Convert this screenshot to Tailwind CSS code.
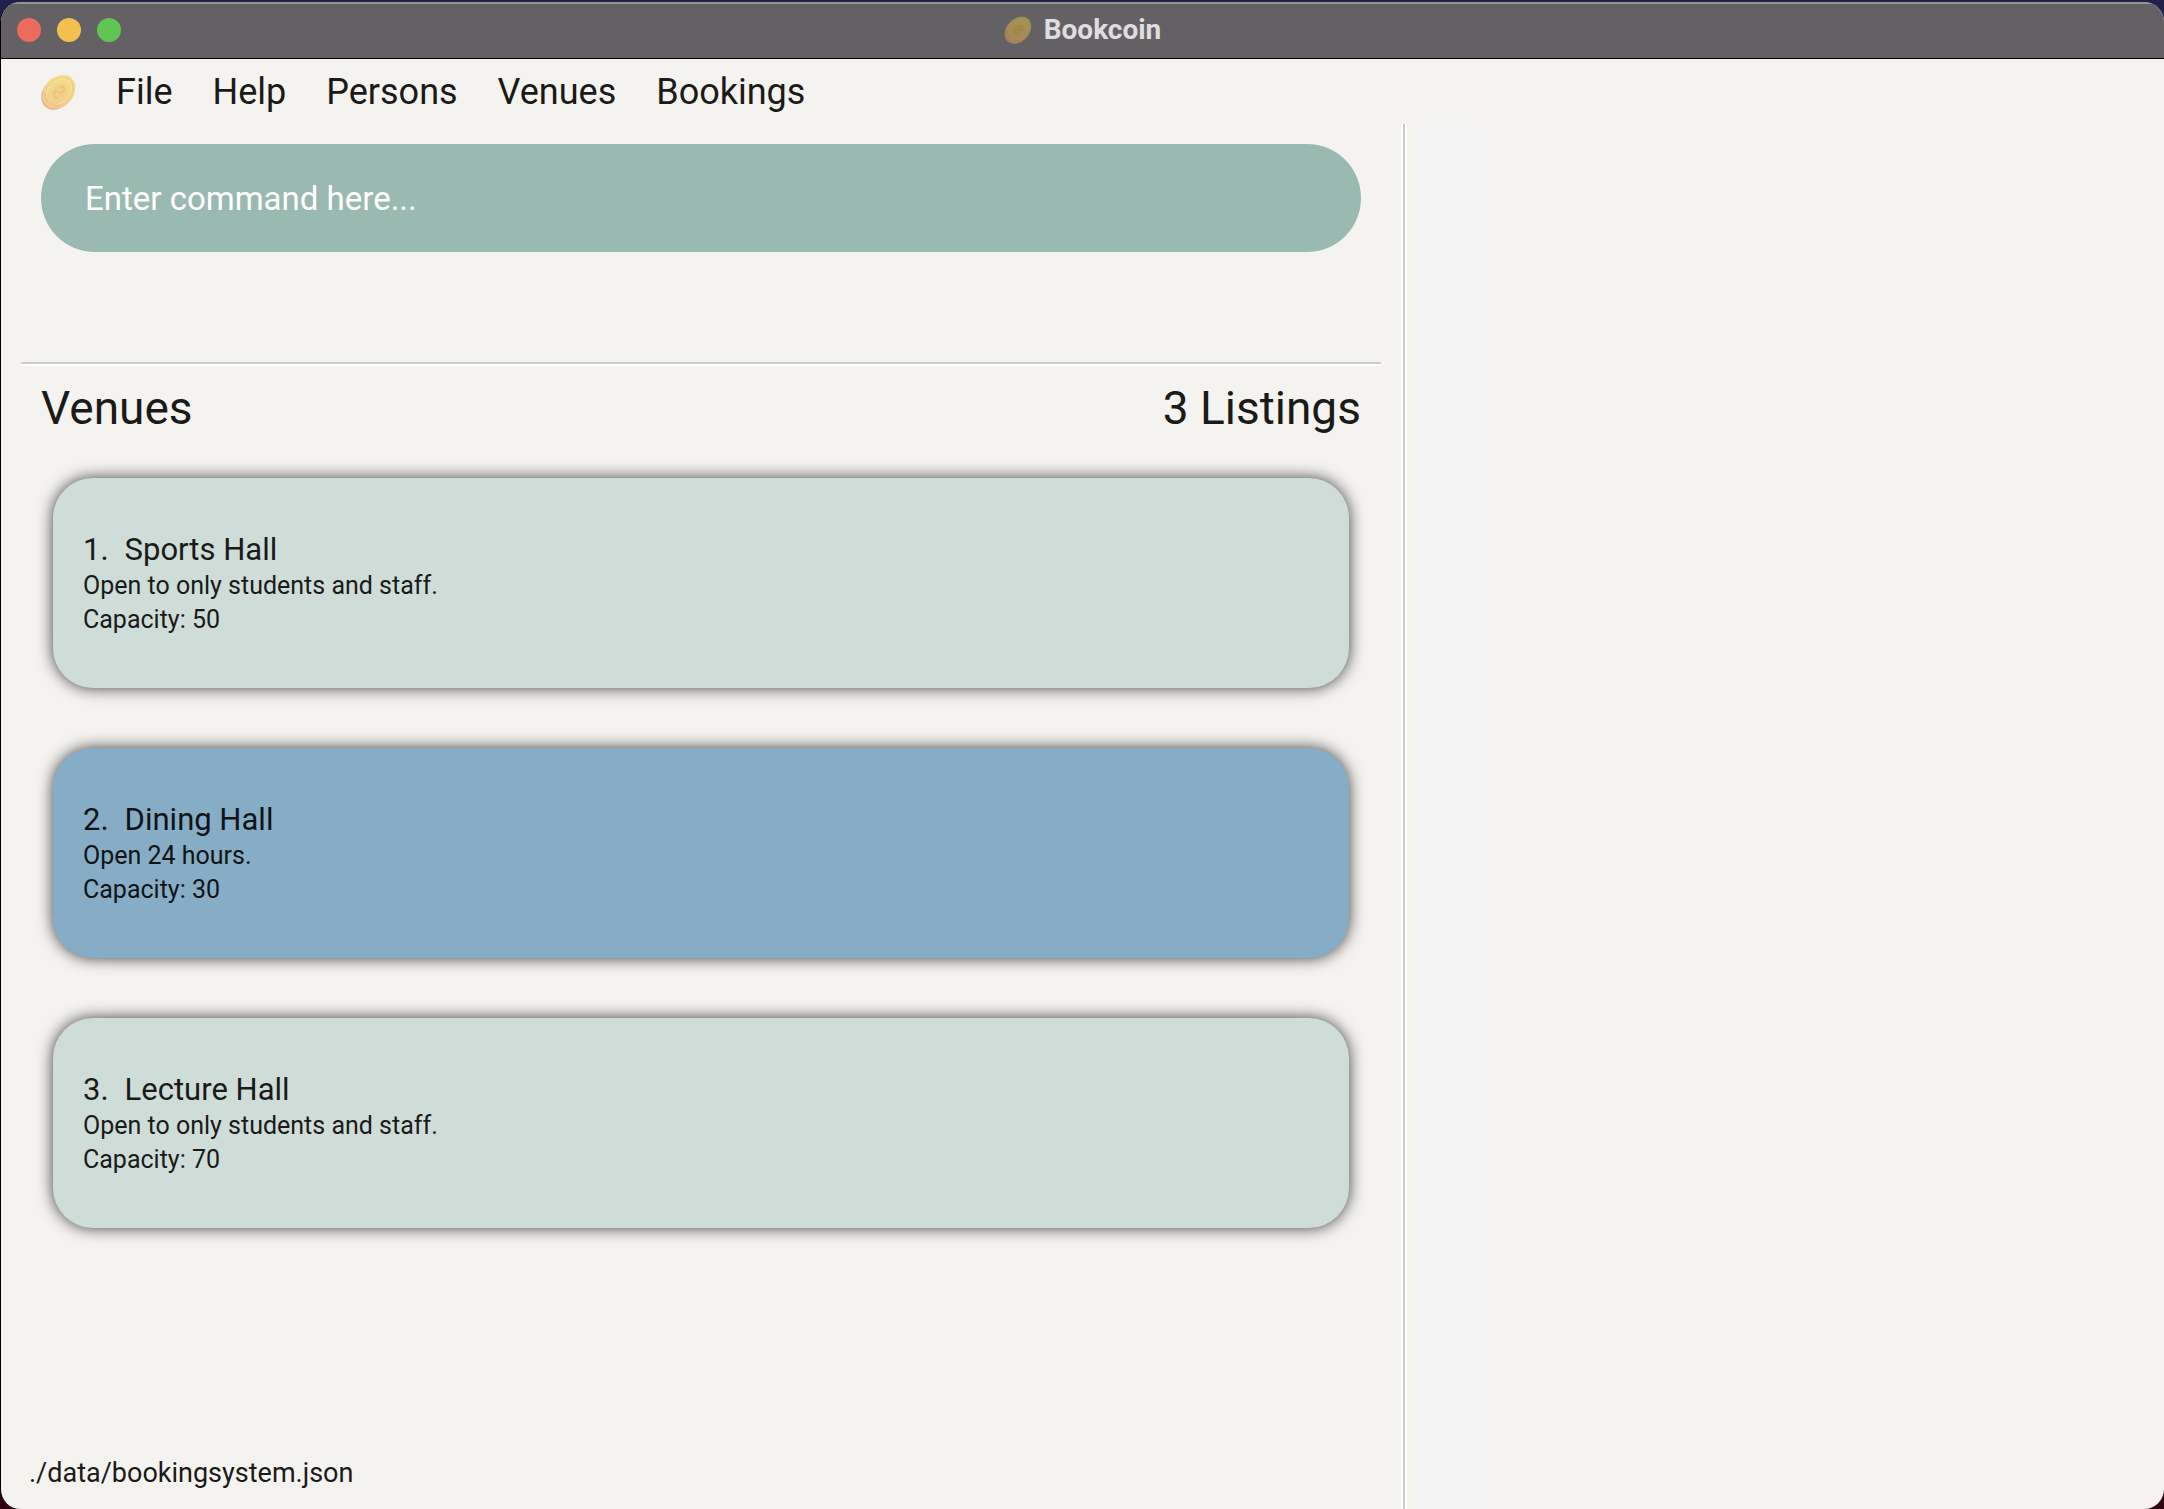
<!DOCTYPE html>
<html lang="en">
<head>
<meta charset="utf-8">
<title>Bookcoin</title>
<script src="https://cdn.jsdelivr.net/npm/@tailwindcss/browser@4"></script>
</head>
<body class="bg-linear-to-b from-[#20204c] from-50% to-[#2e0510] to-50% font-['Roboto',sans-serif] text-[#1a1a18]">
<svg class="absolute size-0" aria-hidden="true">
  <defs>
    <linearGradient id="gold" x1="0" y1="0" x2="0.6" y2="1">
      <stop offset="0" stop-color="#f4e08e"/><stop offset="0.5" stop-color="#f3d78a"/><stop offset="1" stop-color="#f2cc8c"/>
    </linearGradient>
    <symbol id="coin" viewBox="0 0 34 35">
      <g transform="rotate(42 17 17.5)">
        <ellipse cx="17" cy="18.6" rx="14" ry="18.3" fill="#e6b596"/>
        <ellipse cx="17.2" cy="17" rx="14" ry="18" fill="url(#gold)"/>
        <ellipse cx="17.2" cy="17" rx="11.6" ry="15.4" fill="none" stroke="#edc983" stroke-width="0.8"/>
        <ellipse cx="17.2" cy="17" rx="10.6" ry="14.2" fill="none" stroke="#f7e7a4" stroke-width="0.8"/>
        <ellipse cx="17.2" cy="17" rx="6" ry="8.5" fill="#f0cf84"/>
        <path d="M15 12q4-3 5 1t-3 4q-4 2-2 5t5 0" fill="none" stroke="#e8bf7a" stroke-width="1.2"/>
        <path d="M8 27q8 8 18 0" fill="none" stroke="#e3b27e" stroke-width="1" stroke-dasharray="2 1"/>
      </g>
    </symbol>
  </defs>
</svg>
<div class="flex min-h-screen flex-col pt-[2px]">
  <div class="flex grow flex-col overflow-hidden rounded-[20px] border-l border-black bg-[#f5f3f0]">
    <header class="grid h-[57px] grid-cols-[1fr_auto_1fr] items-center border-t-2 border-b border-t-[#949491] border-b-black bg-[#646165] px-4 pb-[2px]">
      <div class="flex gap-4">
        <button type="button" aria-label="Close" class="size-6 rounded-full bg-[#ed6a5f]"></button>
        <button type="button" aria-label="Minimize" class="size-6 rounded-full bg-[#f5bf4f]"></button>
        <button type="button" aria-label="Zoom" class="size-6 rounded-full bg-[#61c554]"></button>
      </div>
      <h1 class="flex items-center gap-3 text-[28px] leading-8 font-bold text-[#dfdde0]">
        <svg class="size-7 brightness-75 saturate-150 opacity-70" aria-hidden="true"><use href="#coin"/></svg>Bookcoin
      </h1>
    </header>
    <nav class="flex h-[65px] items-center gap-10 px-10 text-[36px] leading-10">
      <svg class="h-9 w-[35px]" aria-hidden="true"><use href="#coin"/></svg>
      <button type="button">File</button>
      <button type="button">Help</button>
      <button type="button">Persons</button>
      <button type="button">Venues</button>
      <button type="button">Bookings</button>
    </nav>
    <div class="flex grow">
      <main class="flex w-[65%] flex-col pr-[6px]">
        <div class="px-10 pt-5">
          <input type="text" aria-label="Command" placeholder="Enter command here..." class="block h-27 w-full rounded-full bg-[#9abab1] px-11 text-[33px] text-white placeholder:text-white">
        </div>
        <div class="mx-5 mt-[110px] border-t-2 border-b-2 border-t-[#ccc] border-b-white"></div>
        <div class="flex justify-between px-10 pt-4 text-[46px] leading-[52px]">
          <h2>Venues</h2>
          <p>3 Listings</p>
        </div>
        <ol class="mt-11 flex flex-col gap-15 px-13">
          <li class="flex h-[210px] flex-col justify-center rounded-[40px] bg-[#cfddd8] px-[30px] pt-[2px] text-[25px] leading-[34px] shadow-[0_0_16px_rgba(0,0,0,0.75)]">
            <h3 class="flex gap-4 text-[31px] leading-[38px]"><span>1.</span>Sports Hall</h3>
            <p>Open to only students and staff.</p>
            <p>Capacity: 50</p>
          </li>
          <li class="flex h-[210px] flex-col justify-center rounded-[40px] bg-[#86adc5] px-[30px] pt-[2px] text-[25px] leading-[34px] text-[#101416] shadow-[0_0_16px_rgba(0,0,0,0.75)]">
            <h3 class="flex gap-4 text-[31px] leading-[38px]"><span>2.</span>Dining Hall</h3>
            <p>Open 24 hours.</p>
            <p>Capacity: 30</p>
          </li>
          <li class="flex h-[210px] flex-col justify-center rounded-[40px] bg-[#cfddd8] px-[30px] pt-[2px] text-[25px] leading-[34px] shadow-[0_0_16px_rgba(0,0,0,0.75)]">
            <h3 class="flex gap-4 text-[31px] leading-[38px]"><span>3.</span>Lecture Hall</h3>
            <p>Open to only students and staff.</p>
            <p>Capacity: 70</p>
          </li>
        </ol>
        <footer class="mt-auto px-7 pb-4 text-[27px] leading-10">./data/bookingsystem.json</footer>
      </main>
      <div class="-ml-[6px] w-[6px] border-x-2 border-white bg-[#ccc]"></div>
      <aside class="grow pl-2"><div class="h-full w-17 bg-[#f3f3f3]"></div></aside>
    </div>
  </div>
</div>
</body>
</html>
